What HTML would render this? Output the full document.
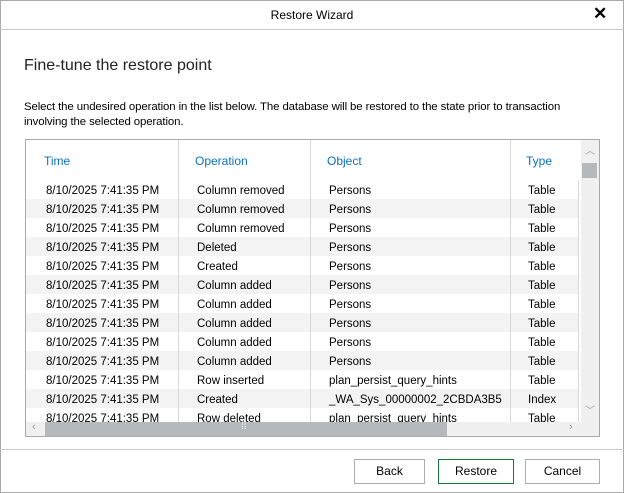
<!DOCTYPE html>
<html><head><style>
body{margin:0;width:624px;height:493px;background:#fff;font-family:"Liberation Sans",sans-serif;overflow:hidden;position:relative;color:#000}
.a{position:absolute}
.win{left:0;top:0;width:622px;height:491px;border:1px solid #a9a9a9}
.t{white-space:nowrap;font-size:11.5px}
.btn{position:absolute;top:459px;height:23px;border:1px solid #adadad;background:#fff;font-size:12px;text-align:center;line-height:23px}
</style></head><body>
<div class="a win"></div>
<div class="a" style="left:0;top:29px;width:624px;height:1px;background:#c8c8c8"></div>
<div class="a t" style="left:0;width:624px;top:8px;text-align:center;font-size:12px">Restore Wizard</div>
<div class="a" style="left:593px;top:4px;font-size:17px;font-weight:bold">✕</div>
<div class="a t" style="left:24px;top:57px;font-size:16px;color:#222">Fine-tune the restore point</div>
<div class="a t" style="left:24px;top:100px;font-size:11.4px;line-height:15px;letter-spacing:-0.1px">Select the undesired operation in the list below. The database will be restored to the state prior to transaction<br>involving the selected operation.</div>
<div class="a" style="left:25px;top:139px;width:573px;height:296px;border:1px solid #a9a9a9;overflow:hidden">
<div id="rows"></div>
</div>
<div class="a" style="left:0;top:449px;width:624px;height:1px;background:#c8c8c8"></div>
<div class="btn" style="left:354px;width:69px">Back</div>
<div class="btn" style="left:438px;width:74px;border-color:#1e7a3a">Restore</div>
<div class="btn" style="left:525px;width:73px">Cancel</div>
<script>
var d=[["Column removed","Persons","Table"],["Column removed","Persons","Table"],["Column removed","Persons","Table"],["Deleted","Persons","Table"],["Created","Persons","Table"],["Column added","Persons","Table"],["Column added","Persons","Table"],["Column added","Persons","Table"],["Column added","Persons","Table"],["Column added","Persons","Table"],["Row inserted","plan_persist_query_hints","Table"],["Created","_WA_Sys_00000002_2CBDA3B5","Index"],["Row deleted","plan_persist_query_hints","Table"]];
var h='';
h+='<div class="a" style="left:18px;top:14px;color:#0a72c4;font-size:12px">Time</div><div class="a" style="left:169px;top:14px;color:#0a72c4;font-size:12px">Operation</div><div class="a" style="left:301px;top:14px;color:#0a72c4;font-size:12px">Object</div><div class="a" style="left:500px;top:14px;color:#0a72c4;font-size:12px">Type</div>';
for(var i=0;i<d.length;i++){var y=40+i*19;h+='<div class="a" style="left:0;top:'+y+'px;width:552px;height:19px;background:'+(i%2?'#f2f3f2':'#fff')+'"><span class="a" style="left:20px;top:5px;font-size:11.5px">8/10/2025 7:41:35 PM</span><span class="a" style="left:171px;top:5px;font-size:11.5px">'+d[i][0]+'</span><span class="a" style="left:303px;top:5px;font-size:11.5px">'+d[i][1]+'</span><span class="a" style="left:502px;top:5px;font-size:11.5px">'+d[i][2]+'</span></div>';}
[152,284,484].forEach(function(x){h+='<div class="a" style="left:'+x+'px;top:0;width:1px;height:282px;background:#d8d8d8"></div>'});
h+='<div class="a" style="left:552px;top:40px;width:1px;height:242px;background:#d8d8d8"></div>';
h+='<div class="a" style="left:555px;top:0;width:18px;height:282px;background:#f0f0f0"></div><div class="a" style="left:559px;top:2px;color:#999;font-size:10px">︿</div><div class="a" style="left:556px;top:23px;width:15px;height:15px;background:#b5b9bb"></div><div class="a" style="left:559px;top:262px;color:#999;font-size:10px">﹀</div>';
h+='<div class="a" style="left:0;top:282px;width:573px;height:14px;background:#f0f0f0"></div><div class="a" style="left:19px;top:282px;width:402px;height:14px;background:#b5b9bb"></div><div class="a" style="left:215px;top:281px;color:#fff;font-size:10px">⁞⁞</div><div class="a" style="left:6px;top:281px;color:#999;font-size:11px">‹</div><div class="a" style="left:543px;top:281px;color:#999;font-size:11px">›</div>';
document.getElementById('rows').innerHTML=h;
</script>
</body></html>
